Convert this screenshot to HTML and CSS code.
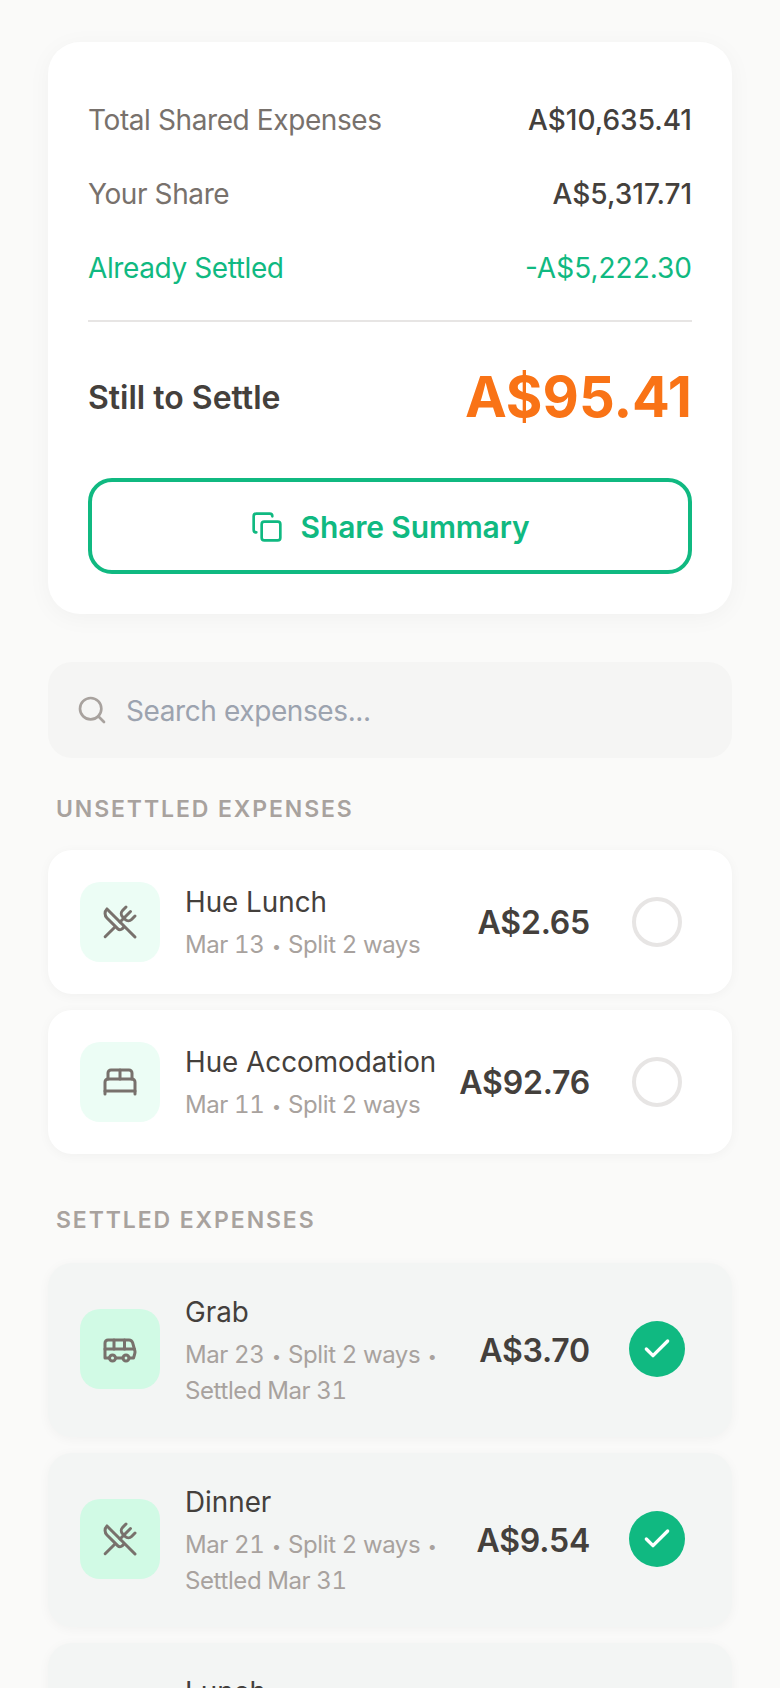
FILE: index.html
```html
<!DOCTYPE html>
<html lang="en">
<head>
    <meta charset="UTF-8">
    <meta name="viewport" content="width=device-width, initial-scale=1.0">
    <title>Shared Expenses</title>
    <link rel="stylesheet" href="styles.css">
</head>
<body>
    <div class="summary-card">
        <div class="summary-row"><span>Total Shared Expenses</span><span class="summary-value">A$10,635.41</span></div>
        <div class="summary-row"><span>Your Share</span><span class="summary-value">A$5,317.71</span></div>
        <div class="summary-row settled-row"><span>Already Settled</span><span class="settled-value">-A$5,222.30</span></div>
        <div class="summary-total">
            <span class="total-label">Still to Settle</span>
            <span class="total-value">A$95.41</span>
        </div>
        <button class="share-button">
            <svg class="share-icon" viewBox="0 0 24 24"><rect x="8" y="8" width="14" height="14" rx="2" ry="2"/><path d="M4 16c-1.1 0-2-.9-2-2V4c0-1.1.9-2 2-2h10c1.1 0 2 .9 2 2"/></svg>
            Share Summary
        </button>
    </div>

    <div class="search-box">
        <svg class="search-icon" viewBox="0 0 24 24"><circle cx="11" cy="11" r="8"/><path d="m21 21-4.3-4.3"/></svg>
        <span class="search-placeholder">Search expenses...</span>
    </div>

    <h2 class="section-title">UNSETTLED EXPENSES</h2>
    <div class="expense-list">
        <div class="expense-card">
            <div class="expense-icon">
                <svg viewBox="0 0 24 24"><path d="m16 2-2.3 2.3a3 3 0 0 0 0 4.2l1.8 1.8a3 3 0 0 0 4.2 0L22 8"/><path d="M15 15 3.3 3.3a4.2 4.2 0 0 0 0 6l7.3 7.3c.7.7 2 .7 2.8 0L15 15Zm0 0 7 7"/><path d="m2.1 21.8 6.4-6.3"/><path d="m19 5-7 7"/></svg>
            </div>
            <div class="expense-info">
                <div class="expense-name">Hue Lunch</div>
                <div class="expense-meta">Mar 13 <span class="dot">•</span> Split 2 ways</div>
            </div>
            <div class="expense-amount">A$2.65</div>
            <div class="status"><span class="status-open"></span></div>
        </div>
        <div class="expense-card">
            <div class="expense-icon">
                <svg viewBox="0 0 24 24"><path d="M2 20v-8a2 2 0 0 1 2-2h16a2 2 0 0 1 2 2v8"/><path d="M4 10V6a2 2 0 0 1 2-2h12a2 2 0 0 1 2 2v4"/><path d="M12 4v6"/><path d="M2 18h20"/></svg>
            </div>
            <div class="expense-info">
                <div class="expense-name">Hue Accomodation</div>
                <div class="expense-meta">Mar 11 <span class="dot">•</span> Split 2 ways</div>
            </div>
            <div class="expense-amount">A$92.76</div>
            <div class="status"><span class="status-open"></span></div>
        </div>
    </div>

    <h2 class="section-title section-title-settled">SETTLED EXPENSES</h2>
    <div class="expense-list">
        <div class="expense-card is-settled">
            <div class="expense-icon">
                <svg viewBox="0 0 24 24"><path d="M8 6v6"/><path d="M15 6v6"/><path d="M2 12h19.6"/><path d="M18 18h3s.5-1.7.8-2.8c.1-.4.2-.8.2-1.2 0-.4-.1-.8-.2-1.2l-1.4-5C20.1 6.8 19.1 6 18 6H4a2 2 0 0 0-2 2v10h3"/><circle cx="7" cy="18" r="2"/><path d="M9 18h5"/><circle cx="16" cy="18" r="2"/></svg>
            </div>
            <div class="expense-info">
                <div class="expense-name">Grab</div>
                <div class="expense-meta">Mar 23 <span class="dot">•</span> Split 2 ways <span class="dot">•</span> Settled Mar 31</div>
            </div>
            <div class="expense-amount">A$3.70</div>
            <div class="status"><span class="status-done"><svg viewBox="0 0 24 24"><path d="M20 6 9 17l-5-5"/></svg></span></div>
        </div>
        <div class="expense-card is-settled">
            <div class="expense-icon">
                <svg viewBox="0 0 24 24"><path d="m16 2-2.3 2.3a3 3 0 0 0 0 4.2l1.8 1.8a3 3 0 0 0 4.2 0L22 8"/><path d="M15 15 3.3 3.3a4.2 4.2 0 0 0 0 6l7.3 7.3c.7.7 2 .7 2.8 0L15 15Zm0 0 7 7"/><path d="m2.1 21.8 6.4-6.3"/><path d="m19 5-7 7"/></svg>
            </div>
            <div class="expense-info">
                <div class="expense-name">Dinner</div>
                <div class="expense-meta">Mar 21 <span class="dot">•</span> Split 2 ways <span class="dot">•</span> Settled Mar 31</div>
            </div>
            <div class="expense-amount">A$9.54</div>
            <div class="status"><span class="status-done"><svg viewBox="0 0 24 24"><path d="M20 6 9 17l-5-5"/></svg></span></div>
        </div>
        <div class="expense-card is-settled">
            <div class="expense-icon">
                <svg viewBox="0 0 24 24"><path d="m16 2-2.3 2.3a3 3 0 0 0 0 4.2l1.8 1.8a3 3 0 0 0 4.2 0L22 8"/><path d="M15 15 3.3 3.3a4.2 4.2 0 0 0 0 6l7.3 7.3c.7.7 2 .7 2.8 0L15 15Zm0 0 7 7"/><path d="m2.1 21.8 6.4-6.3"/><path d="m19 5-7 7"/></svg>
            </div>
            <div class="expense-info">
                <div class="expense-name">Lunch</div>
                <div class="expense-meta">Split 2 ways <span class="dot">•</span><br>Settled Mar 31</div>
            </div>
        </div>
    </div>
</body>
</html>
```

FILE: styles.css
```css
* { box-sizing: border-box; }
html, body { height: 1688px; overflow: hidden; }
body { margin: 0; padding: 42px 48px 0; background-color: #fafaf9; font-family: Inter, "Liberation Sans", sans-serif; color: #44403c; }

.summary-card { background-color: #fff; padding: 40px; border-radius: 32px; box-shadow: 0 4px 24px rgba(0,0,0,0.04); }
.summary-row { display: flex; justify-content: space-between; align-items: center; height: 74px; padding-top: 2px; font-size: 28px; letter-spacing: -0.4px; color: #78716c; }
.summary-value { color: #44403c; font-weight: 500; letter-spacing: 0; }
.settled-row { color: #10b981; }
.settled-value { letter-spacing: 0; }
.summary-total { display: flex; justify-content: space-between; align-items: center; margin-top: 16px; padding: 41px 0 47px; border-top: 2px solid #e7e5e4; }
.total-label { font-size: 32px; font-weight: 600; }
.total-value { font-size: 56px; line-height: 68px; font-weight: 700; color: #f97316; }
.share-button { display: flex; justify-content: center; align-items: center; gap: 18px; width: 100%; height: 96px; padding: 2px 0 0; background: none; border: 4px solid #10b981; border-radius: 24px; color: #10b981; font-family: inherit; font-size: 30px; letter-spacing: -0.15px; font-weight: 600; }
.share-icon { width: 32px; height: 32px; fill: none; stroke: #10b981; stroke-width: 2; stroke-linecap: round; stroke-linejoin: round; }

.search-box { display: flex; align-items: center; gap: 18px; height: 96px; margin-top: 48px; padding: 0 28px; background-color: #f5f5f4; border-radius: 24px; }
.search-icon { width: 32px; height: 32px; fill: none; stroke: #a8a29e; stroke-width: 2; stroke-linecap: round; stroke-linejoin: round; }
.search-placeholder { padding-top: 2px; font-size: 28px; letter-spacing: -0.4px; color: #9ca3af; }

.section-title { margin: 37px 8px 27px; font-size: 23px; line-height: 28px; font-weight: 600; letter-spacing: 1.9px; color: #a8a29e; }
.section-title-settled { margin-top: 52px; margin-bottom: 29px; }

.expense-list { display: flex; flex-direction: column; gap: 16px; }
.expense-card { display: flex; align-items: center; min-height: 144px; padding: 28px 32px; background-color: #fff; border-radius: 24px; box-shadow: 0 2px 12px rgba(0,0,0,0.04); }
.expense-card.is-settled { background-color: #f3f5f4; }
.expense-icon { display: flex; justify-content: center; align-items: center; flex-shrink: 0; width: 80px; height: 80px; margin-right: 25px; background-color: #ecfdf5; border-radius: 20px; }
.is-settled .expense-icon { margin-bottom: 2px; background-color: #d1fae5; }
.expense-icon svg { width: 36px; height: 36px; fill: none; stroke: #78716c; stroke-width: 2; stroke-linecap: round; stroke-linejoin: round; }
.expense-info { flex: 1; min-width: 0; }
.expense-name { font-size: 27.8px; line-height: 42px; font-weight: 400; }
.expense-meta { margin-top: 4px; font-size: 24px; line-height: 36px; letter-spacing: -0.4px; font-variant-numeric: tabular-nums; color: #a8a29e; }
.dot { display: inline-block; margin: 0 1.5px; font-size: 16px; line-height: 1; vertical-align: 1px; }
.expense-amount { flex-shrink: 0; margin-left: 20px; font-size: 32px; letter-spacing: -0.2px; font-weight: 600; }
.status { display: flex; justify-content: center; align-items: center; flex-shrink: 0; width: 56px; height: 56px; margin-left: 39px; margin-right: 15px; }
.is-settled .status { margin-bottom: 2px; }
.status-open { width: 50px; height: 50px; border: 4px solid #e7e5e4; border-radius: 50%; }
.status-done { display: flex; justify-content: center; align-items: center; width: 56px; height: 56px; background-color: #10b981; border-radius: 50%; }
.status-done svg { width: 32px; height: 32px; fill: none; stroke: #fff; stroke-width: 2.5; stroke-linecap: round; stroke-linejoin: round; }
```
